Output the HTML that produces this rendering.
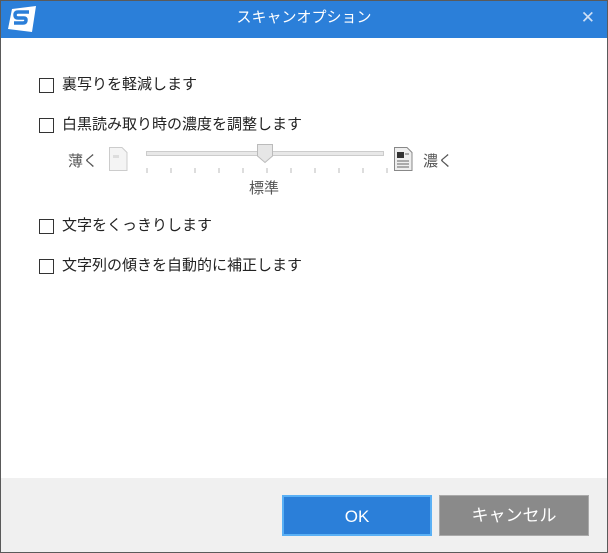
<!DOCTYPE html>
<html><head><meta charset="utf-8"><style>
*{margin:0;padding:0;box-sizing:border-box}
body{width:608px;height:553px;position:relative;overflow:hidden;background:#fff;font-family:"Liberation Sans","Noto Sans CJK JP",sans-serif;color:#222}
.frame{position:absolute;left:0;top:0;width:608px;height:553px;border:1px solid #5a5a5a}
.title{position:absolute;left:1px;top:1px;width:606px;height:37px;background:#2b7fd9;color:#fff;font-size:15px;text-align:center;line-height:34px}
.x{position:absolute;right:12px;top:0;color:#cfe0f5;font-size:17px;line-height:34px}
.cb{position:absolute;left:39px;width:15px;height:15px;border:1px solid #333;background:#fff}
.lb{position:absolute;left:62px;font-size:15px;line-height:18px}
.foot{position:absolute;left:1px;top:478px;width:606px;height:74px;background:#f0f0f0}
.btn{position:absolute;top:495px;height:41px;color:#fff;font-size:17px;text-align:center;line-height:39px}
.small{position:absolute;font-size:15px;color:#555}
</style></head><body>
<div class="frame"></div>
<div class="title">スキャンオプション<span class="x">✕</span>
<svg style="position:absolute;left:6px;top:4px" width="30" height="28" viewBox="0 0 30 28"><path d="M5 4 L29 1 L25 27 L1 24 Z" fill="#fff"/><path d="M22 7 H11 Q8 7 8 10 Q8 13 11 13 H17 Q19 13 19 15 Q19 18 16 18 H7" stroke="#2b7fd9" stroke-width="3.5" fill="none"/></svg>
</div>
<div class="cb" style="top:78px"></div><div class="lb" style="top:76px">裏写りを軽減します</div>
<div class="cb" style="top:118px"></div><div class="lb" style="top:116px">白黒読み取り時の濃度を調整します</div>
<div class="small" style="left:68px;top:150px">薄く</div>
<div class="small" style="left:423px;top:150px">濃く</div>
<svg style="position:absolute;left:107px;top:146px" width="22" height="26"><path d="M2.5 1.5H15l5 5V24.5H2.5Z" fill="#f4f4f4" stroke="#ccc"/><rect x="6" y="9" width="6" height="3" fill="#ddd"/></svg>
<svg style="position:absolute;left:392px;top:146px" width="22" height="26"><path d="M2.5 1.5H15l5 5V24.5H2.5Z" fill="#eee" stroke="#888"/><rect x="5" y="6" width="7" height="6" fill="#333"/><path d="M5 15h12M5 18h12M5 21h12M13 8h4" stroke="#666"/></svg>
<div style="position:absolute;left:146px;top:151px;width:238px;height:5px;border:1px solid #ccc;background:#e8e8e8"></div>
<svg style="position:absolute;left:256px;top:143px" width="18" height="21"><path d="M1.5 1.5H16.5V13L9 19.5 1.5 13Z" fill="#e6e6e6" stroke="#bbb"/></svg>
<svg style="position:absolute;left:140px;top:166px" width="250" height="8"><g stroke="#bbb"><path d="M7 2v5M31 2v5M55 2v5M79 2v5M103 2v5M127 2v5M151 2v5M175 2v5M199 2v5M223 2v5M247 2v5"/></g></svg>
<div class="small" style="left:249px;top:177px">標準</div>
<div class="cb" style="top:219px"></div><div class="lb" style="top:217px">文字をくっきりします</div>
<div class="cb" style="top:259px"></div><div class="lb" style="top:257px">文字列の傾きを自動的に補正します</div>
<div class="foot"></div>
<div class="btn" style="left:282px;width:150px;background:#2b7fd9;border:2px solid #5ab0f5">OK</div>
<div class="btn" style="left:439px;width:150px;background:#8a8a8a;border:1px solid #aaa">キャンセル</div>
</body></html>
